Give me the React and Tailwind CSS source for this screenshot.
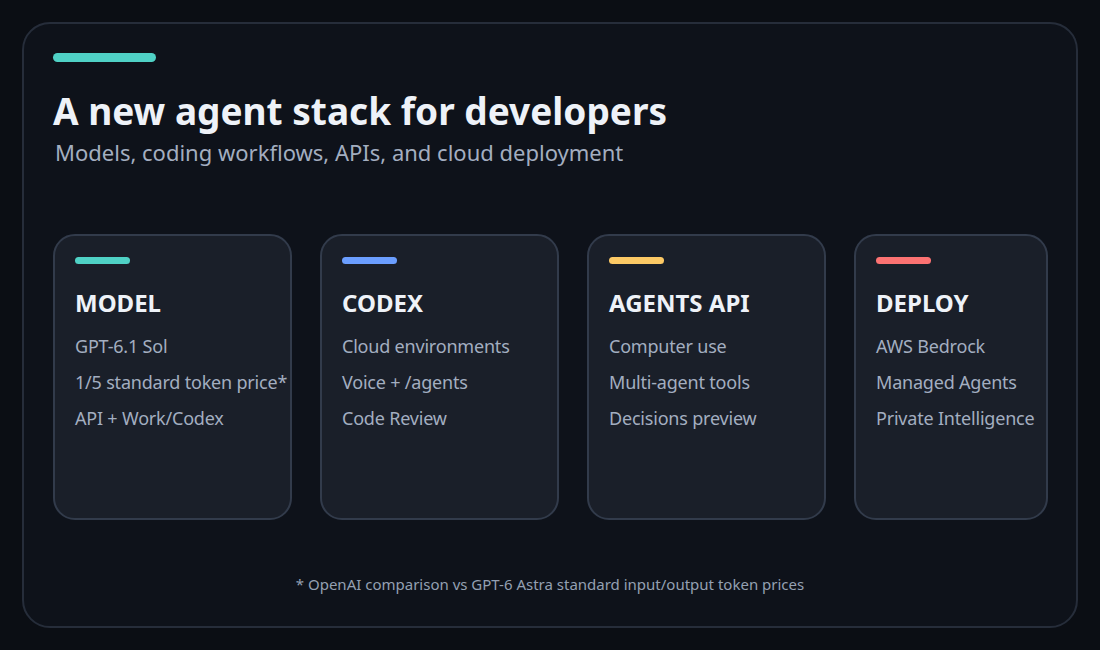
export default function App() {
  const cards = [
    { t: "MODEL", c: "bg-[#4fd1c5]", w: "w-[239px]", items: ["GPT-6.1 Sol", "1/5 standard token price*", "API + Work/Codex"] },
    { t: "CODEX", c: "bg-[#6b9eff]", w: "w-[239px]", items: ["Cloud environments", "Voice + /agents", "Code Review"] },
    { t: "AGENTS API", c: "bg-[#fcc965]", w: "w-[239px]", items: ["Computer use", "Multi-agent tools", "Decisions preview"] },
    { t: "DEPLOY", c: "bg-[#fc7272]", w: "w-[194px]", items: ["AWS Bedrock", "Managed Agents", "Private Intelligence"] },
  ];
  return (
    <div className="w-[1100px] h-[650px] bg-[#0b0e14] p-[22px]" style={{ fontFamily: '"Noto Sans", sans-serif' }}>
      <div className="h-[606px] rounded-[28px] border-2 border-[#262d3a] bg-[#0e121a] pl-[29px] pt-[29px] flex flex-col">
        <div className="w-[103px] h-[9px] rounded-full bg-[#4fd1c5]" />
        <h1 className="mt-[27px] text-[37px] leading-[44px] font-bold text-[#eef2f8]">A new agent stack for developers</h1>
        <p className="mt-[4px] ml-[2px] text-[22px] leading-[30px] text-[#a3aec0]">Models, coding workflows, APIs, and cloud deployment</p>
        <div className="mt-[67px] flex gap-[28px]">
          {cards.map((k) => (
            <div key={k.t} className={`${k.w} h-[286px] shrink-0 rounded-[22px] border-2 border-[#323b4b] bg-[#1a1f29] pl-[20px] pt-[21px]`}>
              <div className={`w-[55px] h-[7px] rounded-full ${k.c}`} />
              <div className="mt-[23px] text-[24px] leading-[32px] font-bold text-[#eef2f8]">{k.t}</div>
              <div className="mt-[14px] flex flex-col gap-[10px] text-[18px] leading-[26px] text-[#a3aec0] whitespace-nowrap tracking-[-0.2px]">
                {k.items.map((i) => <div key={i}>{i}</div>)}
              </div>
            </div>
          ))}
        </div>
        <p className="mt-[53px] pr-[29px] text-center text-[15px] text-[#94a0b2]">* OpenAI comparison vs GPT-6 Astra standard input/output token prices</p>
      </div>
    </div>
  );
}
